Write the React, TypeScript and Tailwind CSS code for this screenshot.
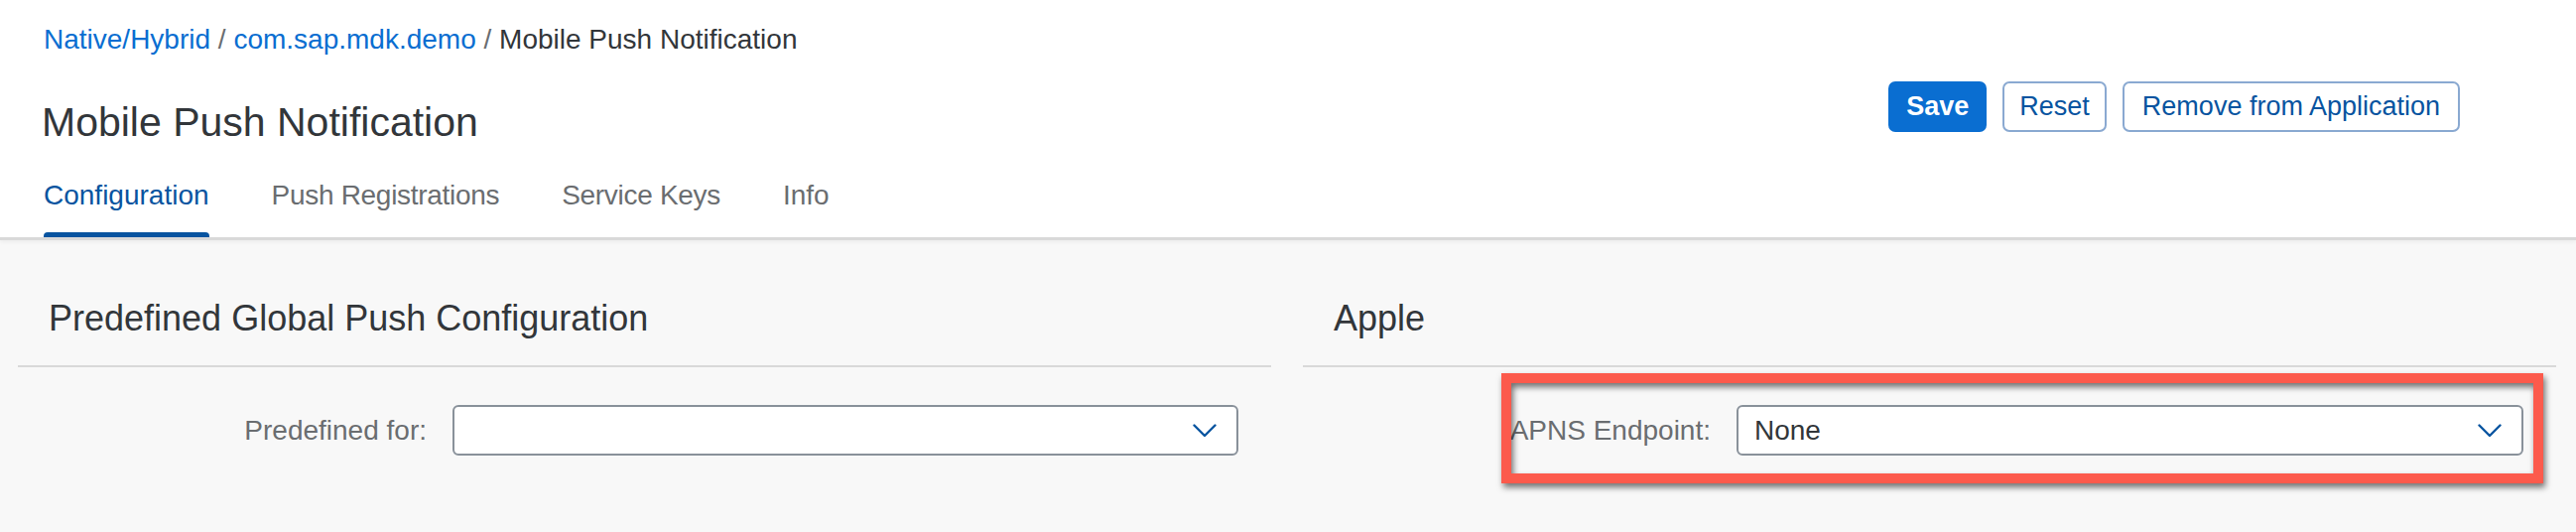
import React from "react";

const Chevron = () => (
  <svg viewBox="0 0 24 14" className="w-[24px] h-[14px] shrink-0" fill="none">
    <polyline
      points="1.5,1.5 12,12 22.5,1.5"
      stroke="#0854a0"
      strokeWidth="2.4"
      strokeLinecap="round"
      strokeLinejoin="round"
    />
  </svg>
);

const Select = ({ value }: { value?: string }) => (
  <div className="flex-1 h-[51px] ml-[26px] mr-[33px] flex items-center bg-white border-2 border-[#89919a] rounded-[6px] pl-[16px] pr-[20px]">
    <span className="flex-1 text-[28px] leading-[32px] text-[#32363a]">{value}</span>
    <Chevron />
  </div>
);

const tabs = [
  { label: "Configuration", cls: "text-[#0854a0]" },
  { label: "Push Registrations", cls: "text-[#6a6d70] tracking-[-0.3px]" },
  { label: "Service Keys", cls: "text-[#6a6d70] tracking-[-0.3px]" },
  { label: "Info", cls: "text-[#6a6d70]" },
];

export default function App() {
  return (
    <div className="h-screen flex flex-col bg-[#f8f8f8] font-['Liberation_Sans',Arial,sans-serif] overflow-hidden">
      <header className="relative z-10 bg-white border-b-[3px] border-[#d9d9d9] shadow-[0_2px_4px_rgba(0,0,0,0.05)] pl-[44px] pt-[24px]">
        <nav className="text-[28px] leading-[32px] text-[#6a6d70]">
          <a className="text-[#0a6ed1]">Native/Hybrid</a> /{" "}
          <a className="text-[#0a6ed1]">com.sap.mdk.demo</a> /{" "}
          <span className="text-[#32363a]">Mobile Push Notification</span>
        </nav>

        <div className="mt-[26px] flex items-start justify-between">
          <h1 className="mt-[17px] -ml-[2px] text-[41px] leading-[48px] text-[#32363a]">
            Mobile Push Notification
          </h1>
          <div className="flex gap-[16px] mr-[117px] text-[27px]">
            <button className="h-[51px] px-[18px] rounded-[7px] bg-[#0a6ed1] text-white font-bold">
              Save
            </button>
            <button className="h-[51px] px-[15px] rounded-[7px] border-2 border-[#8aa9d1] bg-white text-[#0854a0]">
              Reset
            </button>
            <button className="h-[51px] px-[18px] rounded-[7px] border-2 border-[#8aa9d1] bg-white text-[#0854a0]">
              Remove from Application
            </button>
          </div>
        </div>

        <div className="mt-[34px] flex gap-[63px]">
          {tabs.map((t, i) => (
            <div key={t.label} className="flex flex-col">
              <span className={`text-[28px] leading-[32px] ${t.cls}`}>{t.label}</span>
              <div
                className={`mt-[21px] h-[5px] rounded-t-[4px] ${
                  i === 0 ? "bg-[#0854a0]" : "bg-transparent"
                }`}
              />
            </div>
          ))}
        </div>
      </header>

      <main className="flex-1 flex gap-[32px] pl-[18px] pr-[20px]">
        <section className="flex-1">
          <h2 className="pt-[57px] pb-[25px] px-[31px] text-[36px] leading-[44px] text-[#32363a] border-b-2 border-[#d9d9d9]">
            Predefined Global Push Configuration
          </h2>
          <div className="mt-[38px] flex items-center">
            <label className="w-[412px] shrink-0 text-right text-[28px] leading-[32px] text-[#6a6d70]">
              Predefined for:
            </label>
            <Select />
          </div>
        </section>

        <section className="flex-1">
          <h2 className="pt-[57px] pb-[25px] px-[31px] text-[36px] leading-[44px] text-[#32363a] border-b-2 border-[#d9d9d9]">
            Apple
          </h2>
          <div className="relative mt-[38px] flex items-center">
            <label className="w-[411px] shrink-0 text-right text-[28px] leading-[32px] text-[#6a6d70]">
              APNS Endpoint:
            </label>
            <Select value="None" />
            <div className="absolute left-[200px] right-[13px] -top-[32px] -bottom-[28px] border-[10px] border-[#fc5a4c] pointer-events-none drop-shadow-[2px_4px_3px_rgba(0,0,0,0.55)]" />
          </div>
        </section>
      </main>
    </div>
  );
}
